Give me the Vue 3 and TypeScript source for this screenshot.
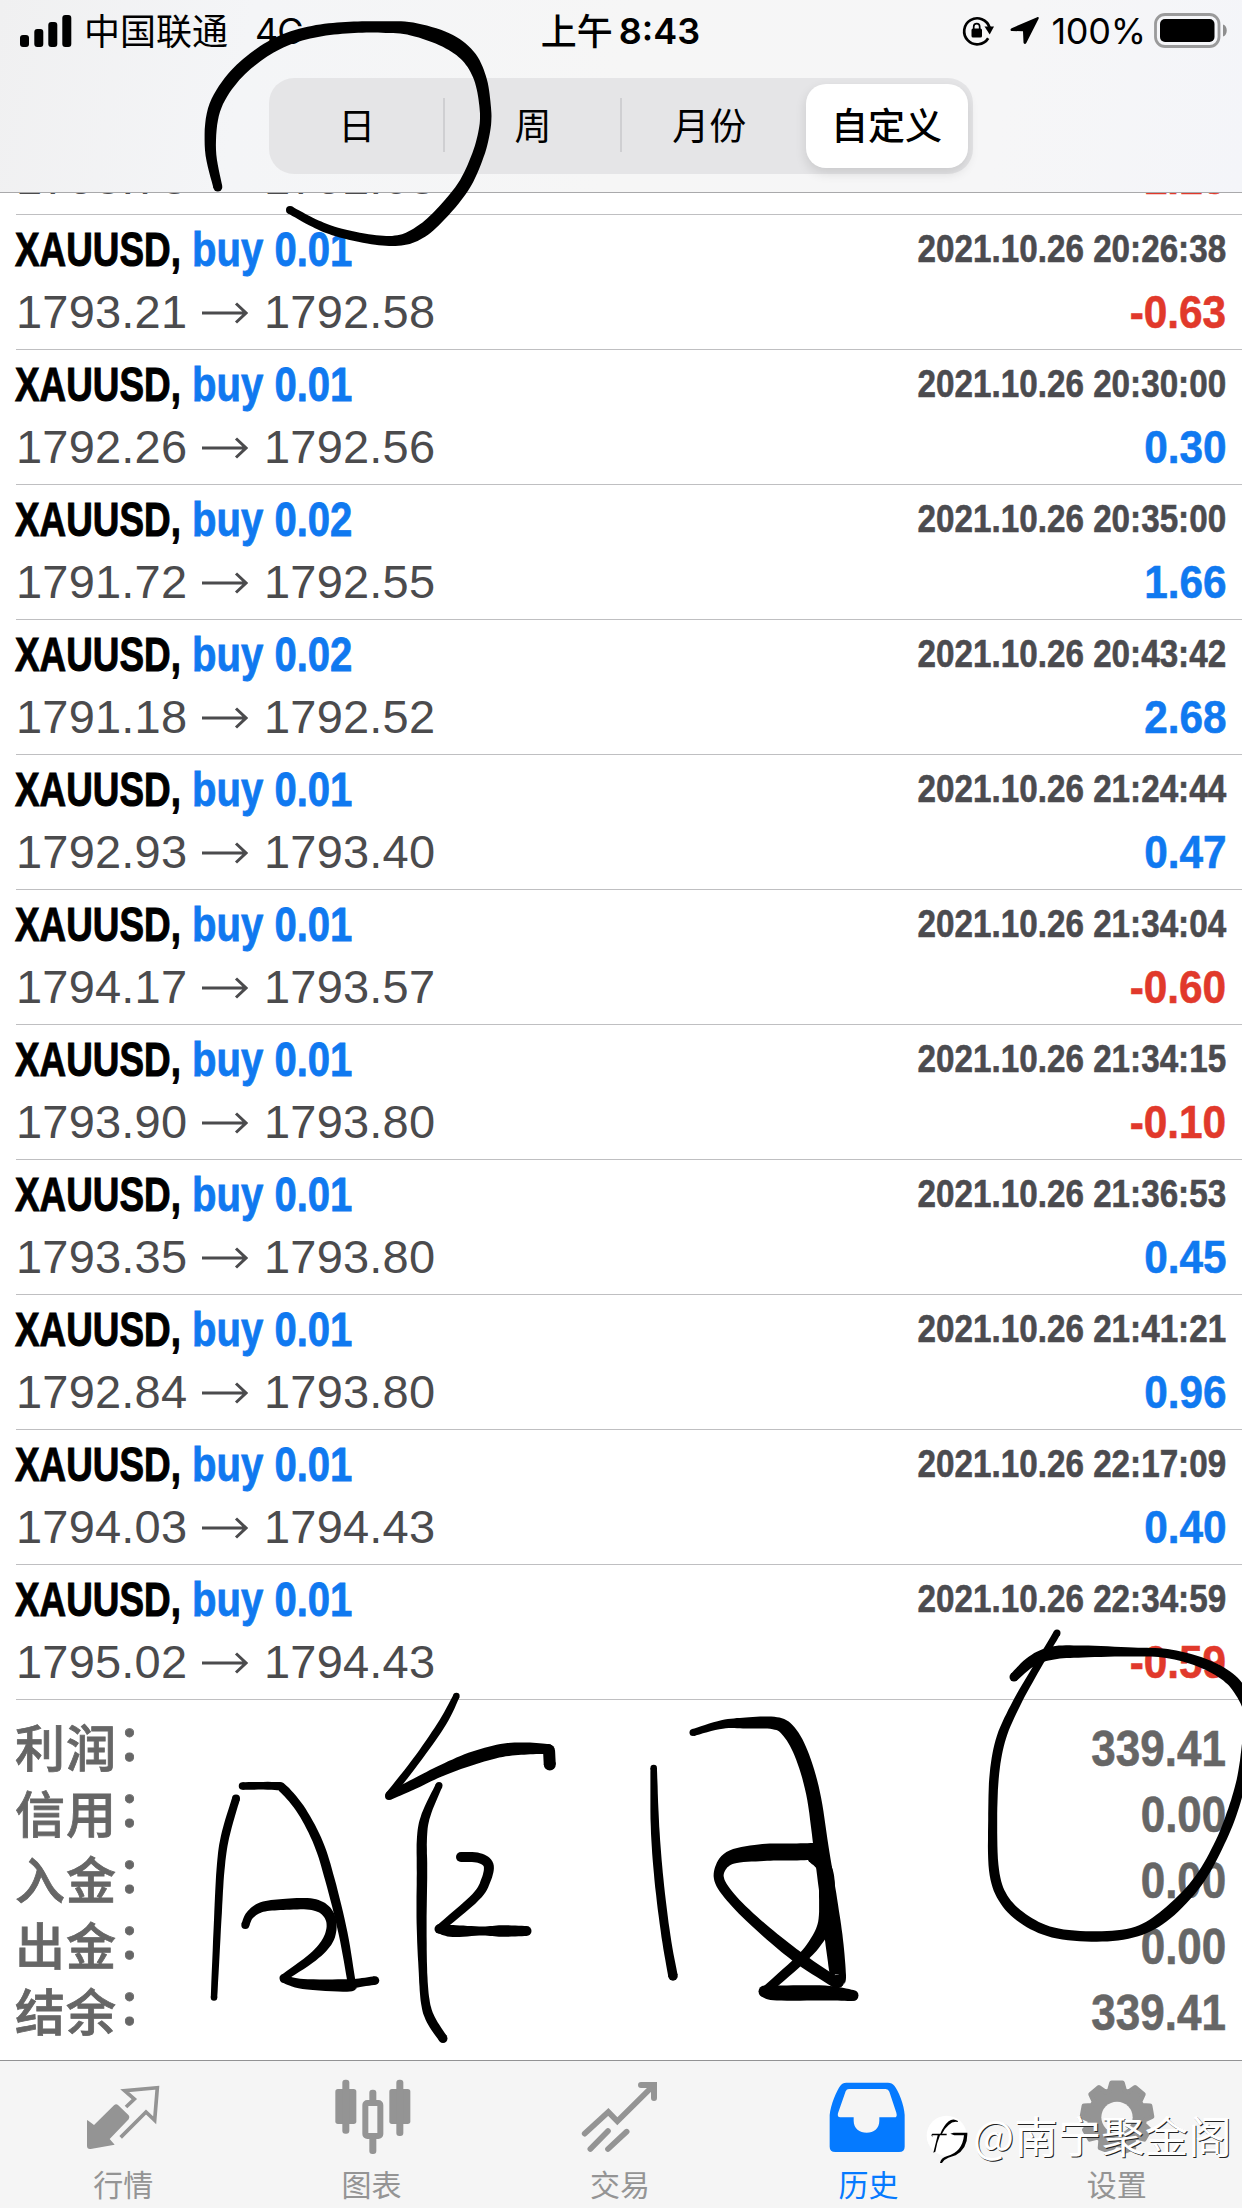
<script setup lang="ts">
interface Deal {
  volume: string
  time: string
  open: string
  close: string
  profit: string
}

const deals: Deal[] = [
  { volume: '0.01', time: '2021.10.26 20:26:38', open: '1793.21', close: '1792.58', profit: '-0.63' },
  { volume: '0.01', time: '2021.10.26 20:30:00', open: '1792.26', close: '1792.56', profit: '0.30' },
  { volume: '0.02', time: '2021.10.26 20:35:00', open: '1791.72', close: '1792.55', profit: '1.66' },
  { volume: '0.02', time: '2021.10.26 20:43:42', open: '1791.18', close: '1792.52', profit: '2.68' },
  { volume: '0.01', time: '2021.10.26 21:24:44', open: '1792.93', close: '1793.40', profit: '0.47' },
  { volume: '0.01', time: '2021.10.26 21:34:04', open: '1794.17', close: '1793.57', profit: '-0.60' },
  { volume: '0.01', time: '2021.10.26 21:34:15', open: '1793.90', close: '1793.80', profit: '-0.10' },
  { volume: '0.01', time: '2021.10.26 21:36:53', open: '1793.35', close: '1793.80', profit: '0.45' },
  { volume: '0.01', time: '2021.10.26 21:41:21', open: '1792.84', close: '1793.80', profit: '0.96' },
  { volume: '0.01', time: '2021.10.26 22:17:09', open: '1794.03', close: '1794.43', profit: '0.40' },
  { volume: '0.01', time: '2021.10.26 22:34:59', open: '1795.02', close: '1794.43', profit: '-0.59' },
]

const totals = [
  { label: '利润', value: '339.41' },
  { label: '信用', value: '0.00' },
  { label: '入金', value: '0.00' },
  { label: '出金', value: '0.00' },
  { label: '结余', value: '339.41' },
]

const periods = ['日', '周', '月份', '自定义']

// Nine-toothed gear outline around (950, 202)
const gear = Array.from({ length: 9 }, (_, i) =>
  [[-16, 83], [-9, 105], [9, 105], [16, 83]].map(([deg, r]) => {
    const a = ((i * 40 + deg - 90) * Math.PI) / 180
    return `${(950 + r * Math.cos(a)).toFixed(1)},${(202 + r * Math.sin(a)).toFixed(1)}`
  }).join(' '),
).join(' ')

// Pen strokes: x, y, pen width
type Nib = [number, number, number]

const pen: Nib[][] = [
  [[217.8, 187, 9], [210.5, 150, 11], [214, 110, 12.5], [232, 79, 12.5], [257, 56, 12.5], [285, 40, 12.5], [317, 31, 12], [350, 27.5, 11.5], [382, 27, 11.5], [412, 29, 13], [446, 40, 15], [468, 56, 14.5], [480, 78, 12.5], [485, 105, 11.5], [485, 127, 11.5], [478, 155, 12], [463, 187, 12.5], [437, 218, 13], [417, 234, 13], [398, 240.5, 10.5], [372, 239.5, 9.5], [337, 232, 9], [314, 223, 8.5], [290, 210, 8]],
  [[236, 1798.5, 8], [225, 1837, 8.5], [220.5, 1870, 8], [217.7, 1920, 7.5], [214, 1997.5, 6.5]],
  [[242.5, 1786, 7.5], [275, 1786, 8], [284, 1789.5, 9], [302, 1811.5, 9], [318.5, 1843.5, 9.5], [330, 1880, 9.5], [343, 1933, 9], [351.5, 1982, 8]],
  [[245.3, 1925, 8], [250, 1915, 8.5], [262, 1907, 10], [283, 1904.5, 11], [310, 1904, 11.5], [325, 1910, 11], [331.5, 1923, 10], [328, 1940, 10.5], [313, 1957, 9], [283, 1978, 7]],
  [[284, 1979, 8], [303, 1984, 10], [347, 1985.5, 12.5], [355, 1983.5, 9], [375, 1980.5, 8.5]],
  [[456.4, 1696, 6.5], [443, 1722, 8], [419, 1757, 7.5], [389.6, 1795, 8]],
  [[389, 1796, 8], [412, 1785, 10], [439.5, 1771.5, 11], [470.5, 1759, 13], [501.5, 1750.5, 13], [527, 1748.5, 12], [548.5, 1749, 10]],
  [[549, 1750.5, 12], [549.8, 1764.5, 12]],
  [[439, 1785.5, 7], [426, 1815, 9], [422, 1837, 10], [422, 1873, 10.5], [421.6, 1923, 10], [423, 1973, 8.5], [425.5, 2003, 9], [431, 2020, 9.5], [443, 2038.5, 9]],
  [[461, 1857, 10], [479, 1858, 10], [488.5, 1865, 10], [486, 1880, 9.5], [475.7, 1897, 9], [440, 1928, 8]],
  [[439, 1929, 9], [453, 1931, 12], [482.5, 1931, 9], [501.5, 1931, 11.5], [526.5, 1931, 10]],
  [[653.7, 1768, 6.5], [655, 1826.5, 8.5], [659, 1880, 9], [666, 1936.5, 9], [673, 1976, 9.5]],
  [[693, 1732.5, 7], [722, 1724.5, 8.5], [746, 1723, 11], [773.5, 1723, 12.5], [787.5, 1730, 14], [801, 1753, 14], [813, 1793, 14], [821, 1846.7, 15], [828.7, 1900, 17], [834, 1940, 18], [838, 1976, 16], [838, 1981, 13]],
  [[815, 1851.5, 17], [790, 1852, 17], [763, 1852.5, 17], [732, 1857, 14], [720, 1869, 10.5], [721, 1884, 10], [739, 1906.5, 10], [770, 1935, 11], [801, 1959.5, 12], [835, 1982, 11]],
  [[813, 1857, 12], [825, 1869, 14], [827, 1893, 16], [825, 1923, 14], [815, 1943, 12], [799, 1961, 10], [765, 1991, 9]],
  [[764.5, 1991.5, 12], [777, 1993, 15], [825, 1993, 15], [853, 1995.5, 11]],
  [[1057, 1633, 7], [1037, 1667, 7.5], [1016.7, 1703, 8.5], [1001.5, 1737, 9.5], [994.5, 1773, 9.5], [992.7, 1820, 9], [994, 1870, 10], [1003, 1898, 10], [1023, 1918.5, 10.5], [1053, 1932.5, 10], [1096.7, 1936.5, 10.5], [1136.7, 1931.5, 10], [1166.7, 1914, 11.5], [1196.7, 1883, 10.5], [1218, 1846.7, 9.5], [1233, 1810, 10], [1242, 1776, 9], [1247, 1740, 9]],
  [[1014, 1677, 9], [1032, 1661, 11], [1053, 1653, 13], [1083, 1651.5, 12], [1133, 1652, 9], [1167, 1653.5, 9], [1200, 1662, 10], [1226.7, 1676, 11.5], [1241, 1692, 12], [1252, 1715, 11]],
]

function spline(a: number, b: number, c: number, d: number, t: number): number {
  return 0.5 * (2 * b + (c - a) * t + (2 * a - 5 * b + 4 * c - d) * t * t + (3 * b - a - 3 * c + d) * t * t * t)
}

// Turns a centre line with pen widths into a closed outline
function outline(nibs: Nib[]): string {
  const pts: Nib[] = []
  for (let i = 0; i < nibs.length - 1; i++) {
    const p0 = nibs[Math.max(i - 1, 0)]
    const p1 = nibs[i]
    const p2 = nibs[i + 1]
    const p3 = nibs[Math.min(i + 2, nibs.length - 1)]
    for (let s = 0; s < 8; s++) {
      const t = s / 8
      pts.push([0, 1, 2].map((k) => spline(p0[k], p1[k], p2[k], p3[k], t)) as Nib)
    }
  }
  pts.push(nibs[nibs.length - 1])
  const left: string[] = []
  const right: string[] = []
  pts.forEach(([x, y, w], i) => {
    const a = pts[Math.max(i - 1, 0)]
    const b = pts[Math.min(i + 1, pts.length - 1)]
    const len = Math.hypot(b[0] - a[0], b[1] - a[1]) || 1
    const nx = (-(b[1] - a[1]) / len) * (w / 2)
    const ny = ((b[0] - a[0]) / len) * (w / 2)
    left.push(`${(x + nx).toFixed(1)} ${(y + ny).toFixed(1)}`)
    right.unshift(`${(x - nx).toFixed(1)} ${(y - ny).toFixed(1)}`)
  })
  return `M${left.concat(right).join('L')}Z`
}

const strokes = pen.map((nibs) => ({
  d: outline(nibs),
  caps: [nibs[0], nibs[nibs.length - 1]],
}))
</script>

<template>
  <div class="phone">
    <header class="top">
      <div class="status">
        <div class="carrier">
          <svg class="signal" width="52" height="32" viewBox="0 0 52 32">
            <rect x="0" y="20" width="9" height="12" rx="3" />
            <rect x="14.3" y="14" width="9" height="18" rx="3" />
            <rect x="28.3" y="7" width="9" height="25" rx="3" />
            <rect x="42.3" y="0" width="9" height="32" rx="3" />
          </svg>
          <span class="operator">中国联通</span>
          <span class="network">4G</span>
        </div>
        <div class="clock"><span class="han">上午</span><span class="digits">8:43</span></div>
        <div class="power">
          <svg width="34" height="34" viewBox="0 0 34 34">
            <path d="M27.2 24.2A13 13 0 1 1 28.6 13.5" fill="none" stroke="#000" stroke-width="2.7" />
            <path d="M23.5 12.5h9.5l-4.3 8z" />
            <rect x="10.5" y="14.5" width="10.5" height="9" rx="1.5" />
            <path d="M12.7 15v-2.3a3 3 0 0 1 6 0V15" fill="none" stroke="#000" stroke-width="1.7" />
          </svg>
          <svg class="locate" width="30" height="30" viewBox="0 0 30 30">
            <path d="M27.2 1.2 1.6 12.2c-1.8.9-1.3 2.7.5 2.8l10.9.3.5 11.3c.2 1.7 2 2 2.8.4L28.6 2.8c.5-1.2-.3-2-1.4-1.6Z" />
          </svg>
          <span class="percent">100%</span>
          <svg width="74" height="36" viewBox="0 0 74 36">
            <rect x="1.5" y="1.5" width="63.5" height="32" rx="9.5" fill="none" stroke="#9a9a9b" stroke-width="2.8" />
            <rect x="6" y="6" width="54.5" height="23" rx="5" />
            <path d="M69 11.5c5 1 5 11 0 12z" fill="#8e8e8f" />
          </svg>
        </div>
      </div>
      <nav class="segments">
        <span v-for="(p, i) in periods" :key="p" class="segment" :class="{ chosen: i === 3, ruled: i < 2 }">{{ p }}</span>
      </nav>
    </header>

    <main class="history">
      <div class="clipped">
        <div class="line">
          <div class="prices">
            <span class="price">1793.78</span>
            <svg class="arrow" width="46" height="24" viewBox="0 0 46 24"><path d="M0 12H44M34 2.5 44 12 34 21.5" /></svg>
            <span class="price">1792.68</span>
          </div>
          <span class="profit loss">-1.15</span>
        </div>
      </div>
      <article v-for="deal in deals" :key="deal.time" class="deal">
        <div class="line head">
          <div class="title">
            <span class="symbol">XAUUSD,</span>
            <span class="volume">buy {{ deal.volume }}</span>
          </div>
          <time class="time">{{ deal.time }}</time>
        </div>
        <div class="line">
          <div class="prices">
            <span class="price">{{ deal.open }}</span>
            <svg class="arrow" width="46" height="24" viewBox="0 0 46 24"><path d="M0 12H44M34 2.5 44 12 34 21.5" /></svg>
            <span class="price">{{ deal.close }}</span>
          </div>
          <span class="profit" :class="{ loss: deal.profit.startsWith('-') }">{{ deal.profit }}</span>
        </div>
      </article>
      <section class="totals">
        <div v-for="t in totals" :key="t.label" class="total">
          <span class="label">{{ t.label }}<span class="colon">：</span></span>
          <span class="sum">{{ t.value }}</span>
        </div>
      </section>
    </main>

    <footer class="tabs">
      <div class="tab">
        <svg width="90" height="82" viewBox="237 78 270 246">
          <path d="M266 213 282 225 342 166Q348 160 354 165L386 196Q391 202 386 208L329 267 344 284 272 297Q261 298 261 288V210Z" />
          <path d="M378 171 403 147 374 122 472 113 464 211 438 186 362 262" fill="none" stroke="currentColor" stroke-width="11" />
        </svg>
        <span>行情</span>
      </div>
      <div class="tab">
        <svg width="90" height="82" viewBox="983 78 270 246">
          <rect x="1005" y="117" width="63" height="105" rx="8" />
          <rect x="1026" y="89" width="21" height="162" rx="9" />
          <rect x="1167" y="117" width="63" height="105" rx="8" />
          <rect x="1188" y="89" width="21" height="169" rx="9" />
          <rect x="1095" y="159" width="45" height="99" rx="6" fill="none" stroke="currentColor" stroke-width="18" />
          <rect x="1107" y="119" width="21" height="46" rx="9" />
          <rect x="1107" y="256" width="21" height="56" rx="9" />
        </svg>
        <span>图表</span>
      </div>
      <div class="tab">
        <svg width="90" height="82" viewBox="378 78 270 246">
          <g fill="none" stroke="currentColor" stroke-width="17" stroke-linecap="round">
            <path d="M404 251 475 186 502 214 608 109" />
            <path d="M573 105H612V144" stroke-width="18" />
            <path d="M421 297 474 243M474 297 530 245" />
          </g>
        </svg>
        <span>交易</span>
      </div>
      <div class="tab active">
        <svg width="90" height="82" viewBox="73 78 270 246">
          <path fill-rule="evenodd" d="M90 195C92 165 112 120 122 107Q128 98 140 98H265Q277 98 284 107C296 122 314 165 315 195V290Q315 306 298 306H107Q90 306 90 290ZM148 117Q141 117 138 124L115 190Q112 202 122 202H162V212C162 236 180 248 201 248S239 236 239 212V202H284Q294 202 290 188L269 125Q266 117 258 117Z" />
        </svg>
        <span>历史</span>
      </div>
      <div class="tab">
        <svg width="90" height="82" viewBox="818 78 270 246">
          <polygon :points="gear" stroke="currentColor" stroke-width="14" stroke-linejoin="round" />
          <circle cx="950" cy="202" r="47" fill="#f5f5f5" />
        </svg>
        <span>设置</span>
      </div>
    </footer>

    <svg class="ink" width="1242" height="2208" viewBox="0 0 1242 2208">
      <g v-for="(s, i) in strokes" :key="i">
        <path :d="s.d" />
        <circle v-for="(c, k) in s.caps" :key="k" :cx="c[0]" :cy="c[1]" :r="c[2] / 2" />
      </g>
    </svg>

    <div class="watermark">
      <svg width="48" height="50" viewBox="0 0 144 150">
        <circle cx="65" cy="68" r="60" fill="#fff" />
        <path d="M19 66 22 62H46Q56 38 71 25 84 14 99 24L98 27Q83 24 71 36 59 46 51 62H65V67H45Q36 88 31 116L25 119 38 67H22V73Z" />
        <path d="M76 62 86 59H127Q129 106 92 127L70 134Q56 139 48 155L45 149Q49 134 65 130 112 118 117 67H88Z" />
      </svg>
      <span>@南宁聚金阁</span>
    </div>
  </div>
</template>

<style>
body {
  background: #fff;
}
</style>

<style scoped>
.phone {
  position: relative;
  display: flex;
  flex-direction: column;
  width: 1242px;
  height: 2208px;
  overflow: hidden;
  background: #fff;
  color: #000;
  font-family: "Liberation Sans", "Noto Sans CJK SC", sans-serif;
}

.top {
  box-sizing: border-box;
  flex: none;
  height: 193px;
  border-bottom: 1px solid #a9a9ab;
  background: linear-gradient(100deg, #f0f0f1 0%, #f4f5f7 20%, #f6f6f6 50%, #f6f6f7 80%, #f4f5f9 100%);
}

.status {
  display: grid;
  grid-template-columns: 1fr auto 1fr;
  align-items: center;
  height: 62px;
  padding: 0 14px 0 20px;
  font-family: Inter, "Noto Sans CJK SC", sans-serif;
  font-size: 36px;
}

.carrier,
.clock,
.power {
  display: flex;
  align-items: center;
  white-space: nowrap;
}

.signal {
  margin-right: 12px;
}

.operator {
  margin: -4px 27px 0 0;
  font-weight: 400;
}

.network {
  letter-spacing: -1px;
}

.clock {
  gap: 6px;
  margin-left: -7px;
  font-weight: 500;
}

.han {
  margin-top: -4px;
}

.digits {
  font-weight: 600;
}

.power {
  justify-content: flex-end;
}

.power svg:first-child {
  margin-right: 1px;
}

.locate {
  margin: 0 11px 0 14px;
}

.percent {
  margin-right: 8px;
  letter-spacing: -0.2px;
}

.segments {
  display: flex;
  box-sizing: border-box;
  width: 704px;
  height: 96px;
  margin: 16px 0 0 269px;
  padding: 6px 5px 6px 0;
  border-radius: 25px;
  background: #e5e5e7;
  font-size: 37px;
  line-height: 52px;
}

.segment {
  display: flex;
  position: relative;
  box-sizing: border-box;
  flex: 1 1 176px;
  align-items: center;
  justify-content: center;
  padding: 4px 1px 0 0;
}

.segment.ruled::after {
  position: absolute;
  top: 14px;
  right: 0;
  width: 2px;
  height: 54px;
  background: #cfcfd2;
  content: "";
}

.segment.chosen {
  flex: 0 0 162px;
  margin-left: 8px;
  border-radius: 20px;
  background: #fff;
  box-shadow: 0 5px 12px rgba(0, 0, 0, 0.12);
  font-weight: 500;
}

.history {
  flex: none;
  height: 1867px;
}

.clipped {
  display: flex;
  flex-direction: column;
  justify-content: flex-end;
  box-sizing: border-box;
  height: 22px;
  margin-left: 16px;
  padding-right: 16px;
  padding-bottom: 4px;
  overflow: hidden;
  border-bottom: 1px solid #bfbfc1;
}

.deal {
  display: flex;
  flex-direction: column;
  box-sizing: border-box;
  height: 135px;
  margin-left: 16px;
  padding: 4px 16px 0 0;
  border-bottom: 1px solid #bfbfc1;
}

.line {
  display: flex;
  flex: none;
  align-items: center;
  justify-content: space-between;
  height: 65px;
  white-space: nowrap;
}

.line.head {
  height: 60px;
}

.title {
  display: flex;
  font-size: 48px;
  font-weight: 700;
}

.symbol {
  width: 177px;
  margin-left: -1px;
  transform: scaleX(0.768);
  transform-origin: left;
  -webkit-text-stroke: 1px currentColor;
}

.volume {
  color: #1079f0;
  transform: scaleX(0.835);
  transform-origin: left;
  -webkit-text-stroke: 0.8px currentColor;
}

.time {
  color: #4b4b4f;
  font-size: 39px;
  font-weight: 700;
  transform: scaleX(0.852);
  transform-origin: right;
  -webkit-text-stroke: 0.6px currentColor;
}

.prices {
  display: flex;
  align-items: center;
  color: #4b4b4d;
  font-size: 47px;
}

.price {
  width: 171px;
  letter-spacing: 0.2px;
}

.arrow {
  margin: 2px 16px 0 15px;
  fill: none;
  stroke: #4b4b4d;
  stroke-width: 3;
}

.profit {
  color: #1079f0;
  font-size: 47px;
  font-weight: 700;
  transform: scaleX(0.9);
  transform-origin: right;
  -webkit-text-stroke: 0.6px currentColor;
}

.profit.loss {
  color: #e1392b;
}

.totals {
  padding: 16px 16px 0 15px;
}

.total {
  display: flex;
  align-items: center;
  justify-content: space-between;
  height: 66px;
  color: #666;
  font-size: 50px;
  font-weight: 700;
  line-height: 66px;
}

.label {
  margin-top: -9px;
  font-family: "Noto Sans CJK SC", sans-serif;
  font-weight: 500;
  letter-spacing: 1px;
  -webkit-text-stroke: 0.8px currentColor;
}

.colon {
  position: relative;
  top: -6px;
}

.sum {
  transform: scaleX(0.88);
  transform-origin: right;
  -webkit-text-stroke: 0.6px currentColor;
}

.tabs {
  display: flex;
  box-sizing: border-box;
  flex: none;
  height: 148px;
  border-top: 1px solid #929294;
  background: #f5f5f5;
}

.tab {
  display: flex;
  flex: 1 1 0;
  flex-direction: column;
  align-items: center;
  padding-top: 15px;
  color: #949494;
  font-size: 30px;
  line-height: 44px;
}

.tab svg {
  flex: none;
  margin-bottom: 6px;
  fill: currentColor;
}

.tab span {
  margin-right: 2px;
}

.tab.active {
  color: #057aff;
}

.ink {
  position: absolute;
  top: 0;
  left: 0;
  pointer-events: none;
}

.watermark {
  display: flex;
  position: absolute;
  top: 2105px;
  left: 925px;
  align-items: center;
  height: 60px;
  color: #fff;
  font-family: "Noto Sans CJK SC", sans-serif;
  font-size: 43.5px;
  font-weight: 400;
  line-height: 60px;
  text-shadow: 1px 1px 0 #222;
  white-space: nowrap;
}

.watermark svg {
  flex: none;
  margin-top: 6px;
}
</style>
